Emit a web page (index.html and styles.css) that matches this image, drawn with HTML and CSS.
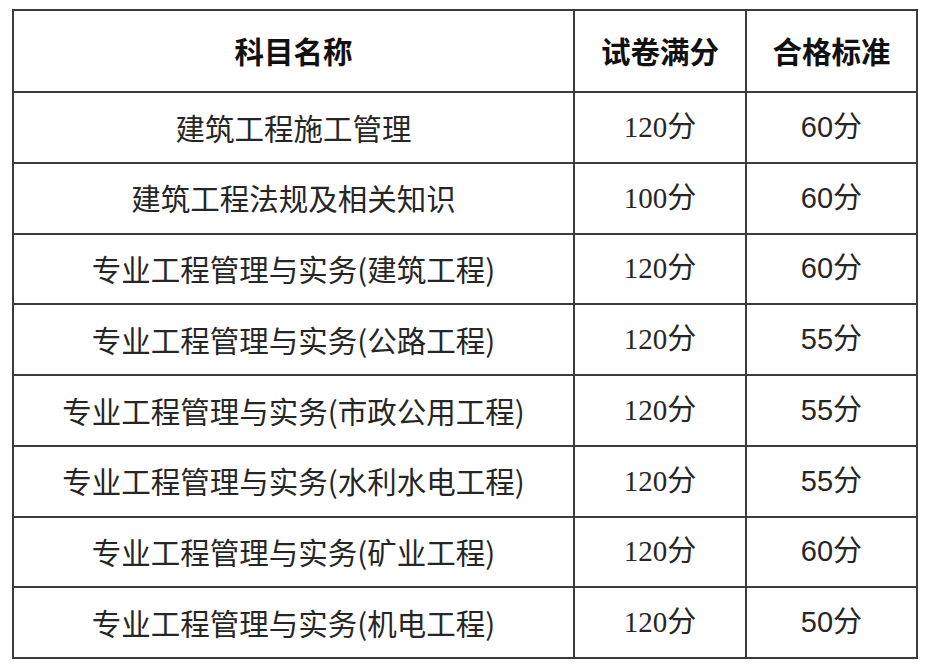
FILE: index.html
```html
<!DOCTYPE html>
<html lang="zh-CN">
<head>
<meta charset="utf-8">
<link rel="stylesheet" href="styles.css">
</head>
<body>
<table class="score-table">
  <colgroup>
    <col class="c1"><col class="c2"><col class="c3">
  </colgroup>
  <thead>
    <tr><th>科目名称</th><th>试卷满分</th><th>合格标准</th></tr>
  </thead>
  <tbody>
    <tr><td>建筑工程施工管理</td><td class="full">120分</td><td class="pass">60分</td></tr>
    <tr><td>建筑工程法规及相关知识</td><td class="full">100分</td><td class="pass">60分</td></tr>
    <tr><td>专业工程管理与实务(建筑工程)</td><td class="full">120分</td><td class="pass">60分</td></tr>
    <tr><td>专业工程管理与实务(公路工程)</td><td class="full">120分</td><td class="pass">55分</td></tr>
    <tr><td>专业工程管理与实务(市政公用工程)</td><td class="full">120分</td><td class="pass">55分</td></tr>
    <tr><td>专业工程管理与实务(水利水电工程)</td><td class="full">120分</td><td class="pass">55分</td></tr>
    <tr><td>专业工程管理与实务(矿业工程)</td><td class="full">120分</td><td class="pass">60分</td></tr>
    <tr><td>专业工程管理与实务(机电工程)</td><td class="full">120分</td><td class="pass">50分</td></tr>
  </tbody>
</table>
</body>
</html>
```
FILE: styles.css
```css
html, body {
  margin: 0;
  padding: 0;
  background: #ffffff;
}
body {
  padding: 9px 0 0 12px;
  font-family: "Noto Sans CJK SC", "Noto Sans", sans-serif;
}
.score-table {
  border-collapse: collapse;
  table-layout: fixed;
  width: 904px;
  color: #262626;
}
.c1 { width: 561px; }
.c2 { width: 172px; }
.c3 { width: 171px; }
.score-table th,
.score-table td {
  border: 2px solid #3c3c3c;
  text-align: center;
  vertical-align: middle;
  padding: 0;
  font-size: 29.5px;
  line-height: 1;
}
.score-table th {
  height: 80px;
  font-weight: 700;
  color: #111;
}
.score-table td {
  height: 68.75px;
  font-weight: 400;
}
.score-table td.full {
  font-family: "Liberation Serif", "Noto Sans CJK SC", serif;
  font-size: 29px;
}
.score-table td.pass {
  font-family: "Liberation Sans", "Noto Sans CJK SC", sans-serif;
  font-size: 29px;
}
```
